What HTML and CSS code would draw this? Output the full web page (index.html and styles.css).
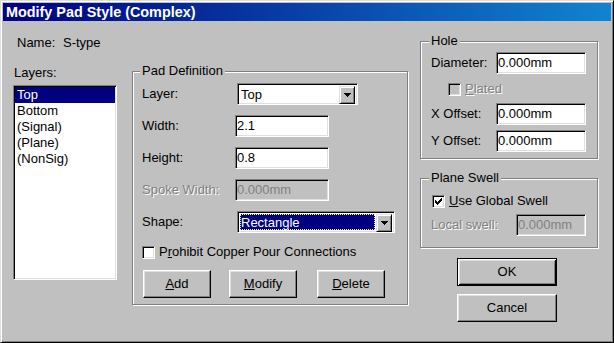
FILE: index.html
```html
<!DOCTYPE html>
<html lang="en">

<head>
    <meta charset="UTF-8">
    <title>Modify Pad Style (Complex)</title>
    <link rel="stylesheet" href="styles.css">
</head>

<body>
    <div id="dialog">
        <div class="titlebar">Modify Pad Style (Complex)</div>

        <div class="content">
            <!-- left: name + layer list -->
            <div class="col-left">
                <div class="name"><span class="name-label">Name:</span>S-type</div>
                <div class="layers-label">Layers:</div>
                <ul class="listbox">
                    <li class="select">Top</li>
                    <li>Bottom</li>
                    <li>(Signal)</li>
                    <li>(Plane)</li>
                    <li>(NonSig)</li>
                </ul>
            </div>

            <!-- middle: pad definition -->
            <fieldset class="group pad-def">
                <legend>Pad Definition</legend>
                <div class="row">
                    <span class="lbl">Layer:</span>
                    <div class="combo combo-layer">
                        <span class="combo-text">Top</span>
                        <span class="arrow"><svg width="7" height="4" viewBox="0 0 7 4"><path d="M0 0h7v1H0zM1 1h5v1H1zM2 2h3v1H2zM3 3h1v1H3z"/></svg></span>
                    </div>
                </div>
                <div class="row">
                    <span class="lbl">Width:</span>
                    <div class="field w-pad">2.1</div>
                </div>
                <div class="row">
                    <span class="lbl">Height:</span>
                    <div class="field w-pad">0.8</div>
                </div>
                <div class="row">
                    <span class="lbl disabled">Spoke Width:</span>
                    <div class="field w-pad off">0.000mm</div>
                </div>
                <div class="row">
                    <span class="lbl">Shape:</span>
                    <div class="combo combo-shape">
                        <span class="combo-text sel">Rectangle</span>
                        <span class="arrow"><svg width="7" height="4" viewBox="0 0 7 4"><path d="M0 0h7v1H0zM1 1h5v1H1zM2 2h3v1H2zM3 3h1v1H3z"/></svg></span>
                    </div>
                </div>
                <div class="check-row prohibit">
                    <span class="check"></span>
                    <span>P<u>r</u>ohibit Copper Pour Connections</span>
                </div>
                <div class="btn-row">
                    <button class="btn btn-add"><u>A</u>dd</button>
                    <button class="btn btn-modify"><u>M</u>odify</button>
                    <button class="btn btn-delete"><u>D</u>elete</button>
                </div>
            </fieldset>

            <!-- right: hole, plane swell, ok/cancel -->
            <div class="col-right">
                <fieldset class="group hole">
                    <legend>Hole</legend>
                    <div class="row">
                        <span class="lbl">Diameter:</span>
                        <div class="field w-hole">0.000mm</div>
                    </div>
                    <div class="check-row plated">
                        <span class="check off"></span>
                        <span class="disabled"><u>P</u>lated</span>
                    </div>
                    <div class="row row-x">
                        <span class="lbl">X Offset:</span>
                        <div class="field w-hole">0.000mm</div>
                    </div>
                    <div class="row row-y">
                        <span class="lbl">Y Offset:</span>
                        <div class="field w-hole">0.000mm</div>
                    </div>
                </fieldset>

                <fieldset class="group swell">
                    <legend>Plane Swell</legend>
                    <div class="check-row">
                        <span class="check"><svg width="7" height="7" viewBox="0 0 7 7"><path d="M0 2h1v3H0zM1 3h1v3H1zM2 4h1v3H2zM3 3h1v3H3zM4 2h1v3H4zM5 1h1v3H5zM6 0h1v3H6z"/></svg></span>
                        <span><u>U</u>se Global Swell</span>
                    </div>
                    <div class="row row-local">
                        <span class="lbl disabled">Local swell:</span>
                        <div class="field w-swell off">0.000mm</div>
                    </div>
                </fieldset>

                <button class="btn btn-big default">OK</button>
                <button class="btn btn-big btn-cancel">Cancel</button>
            </div>
        </div>
    </div>
</body>

</html>
```

FILE: styles.css
```css
* {
    margin: 0;
    padding: 0;
    box-sizing: border-box;
}

body {
    background: #c0c0c0;
    font-family: "Liberation Sans", Arial, sans-serif;
    font-size: 13px;
    line-height: 16px;
    color: #000;
}

#dialog {
    width: 614px;
    height: 343px;
    padding: 2px;
    background: #c0c0c0;
    border: 1px solid;
    border-color: #dfdfdf #000 #000 #dfdfdf;
    box-shadow: inset 1px 1px 0 #fff, inset -1px -1px 0 #808080;
}

.titlebar {
    height: 18px;
    padding-left: 3px;
    background: linear-gradient(to right, #000080, #1084d0);
    color: #fff;
    font-size: 14.4px;
    font-weight: bold;
    line-height: 18px;
}

.content {
    display: flex;
    align-items: flex-start;
}

/* left column */
.col-left {
    width: 104px;
    margin-left: 10px;
}

.name {
    margin-top: 14px;
    padding-left: 4px;
}

.name-label {
    display: inline-block;
    width: 46px;
}

.layers-label {
    margin-top: 14px;
    padding-left: 1px;
}

.listbox {
    height: 195px;
    margin-top: 4px;
    padding: 1px;
    list-style: none;
    background: #fff;
    border: 1px solid;
    border-color: #808080 #fff #fff #808080;
    box-shadow: inset 1px 1px 0 #000, inset -1px -1px 0 #dfdfdf;
}

.listbox li {
    height: 16px;
    padding-left: 2px;
}

.listbox .select {
    background: #000080;
    color: #fff;
}

/* group boxes */
.group {
    border: 1px solid #808080;
    box-shadow: inset 1px 1px 0 #fff, 1px 1px 0 #fff;
}

.group legend {
    margin-left: -2px;
    padding: 0 2px;
    line-height: 16px;
    background: #c0c0c0;
}

.row {
    display: flex;
    align-items: center;
    height: 22px;
}

.lbl {
    flex: none;
}

.disabled {
    color: #808080;
    text-shadow: 1px 1px 0 #fff;
}

.field {
    height: 22px;
    line-height: 18px;
    white-space: nowrap;
    overflow: hidden;
    background: #fff;
    border: 1px solid;
    border-color: #808080 #fff #fff #808080;
    box-shadow: inset 1px 1px 0 #000, inset -1px -1px 0 #dfdfdf;
    padding: 1px 0 0 1px;
}

.field.off {
    background: #c0c0c0;
    color: #808080;
}

.combo {
    display: flex;
    height: 22px;
    margin-left: 2px;
    padding: 2px;
    background: #fff;
    border: 1px solid;
    border-color: #808080 #fff #fff #808080;
    box-shadow: inset 1px 1px 0 #000, inset -1px -1px 0 #dfdfdf;
}

.combo-text {
    flex: 1;
    padding-left: 1px;
    line-height: 18px;
}

.combo-text.sel {
    margin: 0 1px 0 0;
    padding-left: 0;
    line-height: 16px;
    background: #000080;
    color: #fff;
    border: 1px dotted #f4f4c0;
}

.arrow {
    display: flex;
    align-items: center;
    justify-content: center;
    width: 16px;
    height: 18px;
    background: #c0c0c0;
    border: 1px solid;
    border-color: #dfdfdf #000 #000 #dfdfdf;
    box-shadow: inset 1px 1px 0 #fff, inset -1px -1px 0 #808080;
}

.check-row {
    display: flex;
    align-items: center;
    height: 16px;
}

.check {
    display: flex;
    align-items: center;
    justify-content: center;
    width: 13px;
    height: 13px;
    margin-right: 4px;
    background: #fff;
    border: 1px solid;
    border-color: #808080 #fff #fff #808080;
    box-shadow: inset 1px 1px 0 #000, inset -1px -1px 0 #dfdfdf;
}

.check.off {
    background: #c0c0c0;
}

.btn {
    display: block;
    height: 28px;
    font: inherit;
    color: #000;
    text-align: center;
    background: #c0c0c0;
    border: 1px solid;
    border-color: #fff #000 #000 #fff;
    box-shadow: inset -1px -1px 0 #808080, inset 1px 1px 0 #dfdfdf;
}

.btn.default {
    border: 1px solid #000;
    box-shadow: inset 1px 1px 0 #fff, inset -1px -1px 0 #000, inset 2px 2px 0 #dfdfdf, inset -2px -2px 0 #808080;
}

/* pad definition */
.pad-def {
    width: 276px;
    margin-top: 42px;
    margin-left: 15px;
    padding: 4px 9px 6px 9px;
}

.pad-def .lbl {
    width: 93px;
}

.pad-def .row + .row {
    margin-top: 10px;
}

.w-pad {
    width: 94px;
}

.combo-layer {
    width: 121px;
}

.combo-shape {
    width: 158px;
}

.prohibit {
    margin-top: 11px;
}

.btn-row {
    display: flex;
    margin-top: 10px;
}

.btn-row .btn {
    width: 68px;
}

.btn-add {
    margin-left: 1px;
}

.btn-modify {
    margin-left: 18px;
}

.btn-delete {
    margin-left: 20px;
}

/* right column */
.col-right {
    width: 178px;
    margin-left: 12px;
}

.hole {
    margin-top: 12px;
    padding: 3px 10px 6px 10px;
}

.hole .lbl {
    width: 65px;
}

.w-hole {
    width: 90px;
}

.plated {
    margin-top: 7px;
    padding-left: 17px;
}

.row-x {
    margin-top: 6px;
}

.row-y {
    margin-top: 5px;
}

.swell {
    margin-top: 11px;
    padding: 7px 10px 11px 10px;
}

.swell .check-row {
    padding-left: 1px;
}

.row-local {
    margin-top: 5px;
}

.row-local .lbl {
    width: 85px;
}

.w-swell {
    width: 70px;
}

.btn-big {
    width: 100px;
    margin-left: 37px;
    margin-top: 10px;
}

.btn-cancel {
    margin-top: 8px;
}
```
